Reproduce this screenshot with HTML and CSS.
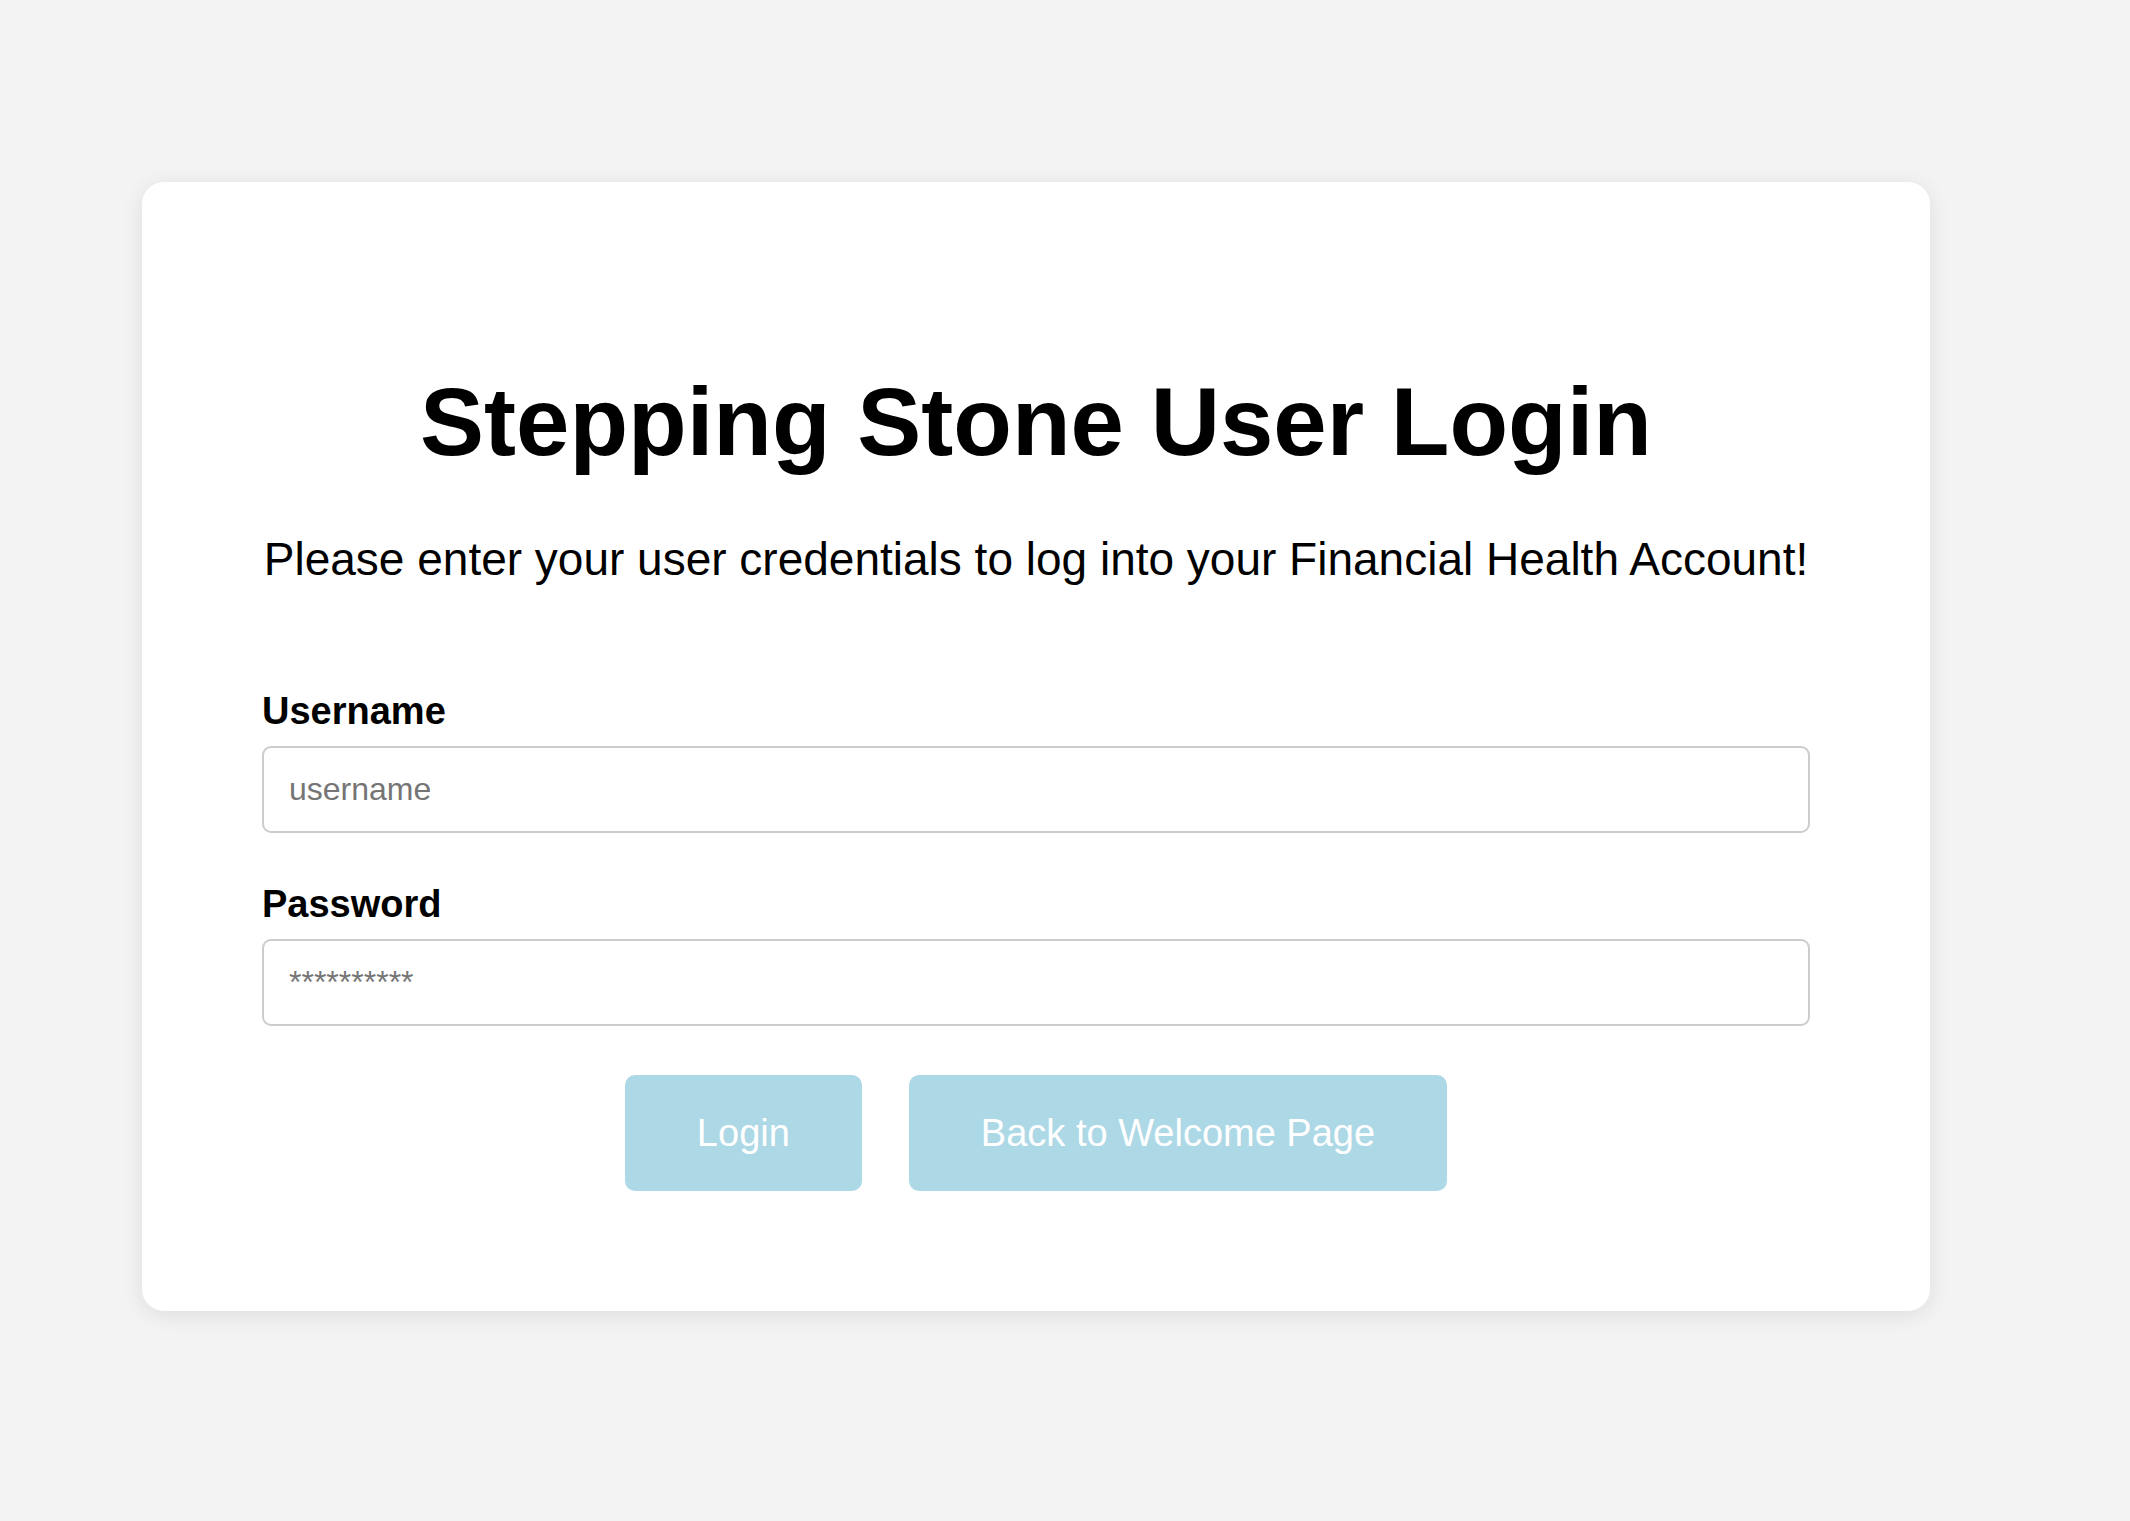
FILE: index.html
```html
<!DOCTYPE html>
<html lang="en">
<head>
<meta charset="utf-8">
<title>Stepping Stone User Login</title>
<link rel="stylesheet" href="styles.css">
</head>
<body>
  <main class="card">
    <h1 class="title">Stepping Stone User Login</h1>
    <p class="subtitle">Please enter your user credentials to log into your Financial Health Account!</p>
    <form class="login-form" onsubmit="return false;">
      <div class="field">
        <label class="field-label" for="username">Username</label>
        <input class="field-input" id="username" type="text" placeholder="username">
      </div>
      <div class="field">
        <label class="field-label" for="password">Password</label>
        <input class="field-input" id="password" type="password" placeholder="**********">
      </div>
      <div class="actions">
        <button class="btn" type="submit">Login</button>
        <button class="btn" type="button">Back to Welcome Page</button>
      </div>
    </form>
  </main>
</body>
</html>
```
FILE: styles.css
```css
html, body {
  margin: 0;
  padding: 0;
}

body {
  background: #f3f3f3;
  font-family: "Liberation Sans", Arial, sans-serif;
  color: #000;
  min-height: 1521px;
}

.card {
  box-sizing: border-box;
  width: 1788px;
  margin: 182px 0 0 142px;
  padding: 185px 120px 120px;
  background: #fff;
  border-radius: 22px;
  box-shadow: 0 4px 22px rgba(0, 0, 0, 0.09);
}

.title {
  margin: 0;
  font-size: 96px;
  line-height: 110px;
  font-weight: 700;
  text-align: center;
}

.subtitle {
  margin: 56px 0 0;
  font-size: 46px;
  line-height: 52px;
  text-align: center;
  white-space: nowrap;
}

.login-form {
  margin-top: 104px;
  display: flex;
  flex-direction: column;
}

.field {
  display: flex;
  flex-direction: column;
  margin-bottom: 49px;
}

.field-label {
  font-size: 38px;
  line-height: 44px;
  font-weight: 700;
  margin-bottom: 13px;
}

.field-input {
  box-sizing: border-box;
  height: 87px;
  padding: 0 25px;
  border: 2px solid #cccccc;
  border-radius: 9px;
  font-family: "Liberation Sans", Arial, sans-serif;
  font-size: 32px;
  color: #333;
  background: #fff;
  outline: none;
}

.field-input::placeholder {
  color: #757575;
}

.actions {
  display: flex;
  justify-content: center;
  gap: 47px;
}

.btn {
  box-sizing: border-box;
  height: 116px;
  padding: 0 72px;
  border: none;
  border-radius: 10px;
  background: #add8e6;
  color: #fff;
  font-family: "Liberation Sans", Arial, sans-serif;
  font-size: 38px;
  cursor: pointer;
}
```
